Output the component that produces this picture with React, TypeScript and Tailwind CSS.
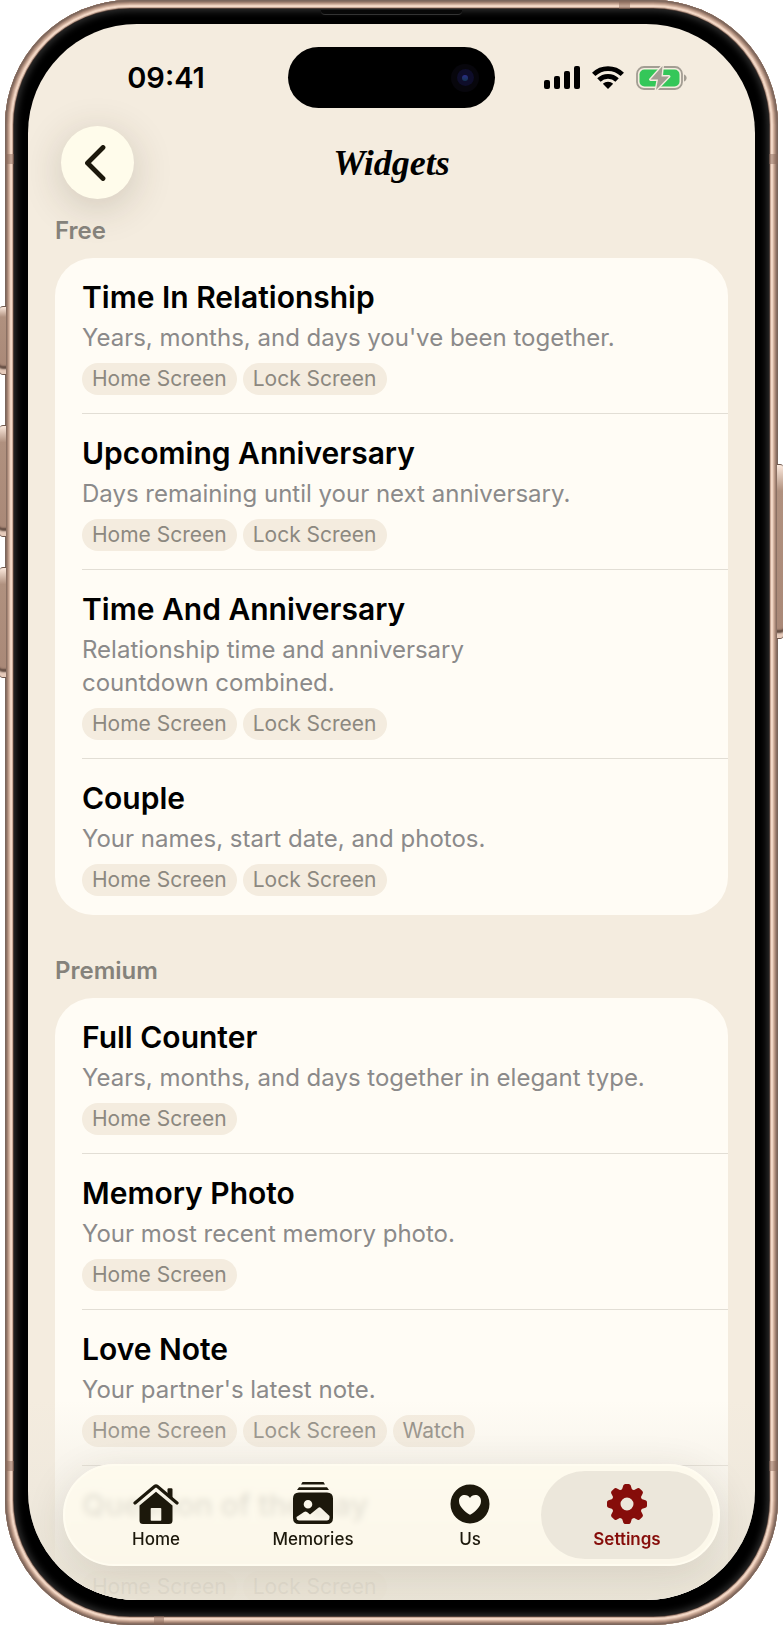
import type { ReactNode } from "react";

type Widget = {
  name: string;
  description?: string;
  narrow?: boolean;
  places: string[];
};

const freeWidgets: Widget[] = [
  {
    name: "Time In Relationship",
    description: "Years, months, and days you've been together.",
    places: ["Home Screen", "Lock Screen"],
  },
  {
    name: "Upcoming Anniversary",
    description: "Days remaining until your next anniversary.",
    places: ["Home Screen", "Lock Screen"],
  },
  {
    name: "Time And Anniversary",
    description: "Relationship time and anniversary countdown combined.",
    narrow: true,
    places: ["Home Screen", "Lock Screen"],
  },
  {
    name: "Couple",
    description: "Your names, start date, and photos.",
    places: ["Home Screen", "Lock Screen"],
  },
];

const premiumWidgets: Widget[] = [
  {
    name: "Full Counter",
    description: "Years, months, and days together in elegant type.",
    places: ["Home Screen"],
  },
  {
    name: "Memory Photo",
    description: "Your most recent memory photo.",
    places: ["Home Screen"],
  },
  {
    name: "Love Note",
    description: "Your partner's latest note.",
    places: ["Home Screen", "Lock Screen", "Watch"],
  },
  {
    name: "Question of the Day",
    places: ["Home Screen", "Lock Screen"],
  },
];

function WidgetRow({ widget }: { widget: Widget }) {
  return (
    <li className="group pl-[27px]">
      <div className="border-b border-[#e2ded5] pt-5 pb-[18px] pr-[27px] group-last:border-transparent">
        <h3 className="text-[30px] leading-[38px] font-semibold text-black">{widget.name}</h3>
        <p
          className={`mt-[5px] min-h-[33px] text-[24px] leading-[33px] text-[#8b8a8a] ${widget.narrow ? "max-w-[440px]" : ""}`}
        >
          {widget.description}
        </p>
        <ul className="mt-[9px] flex gap-1.5">
          {widget.places.map((place) => (
            <li key={place} className="rounded-full bg-[#f4ecdf] px-[10px] text-[21px] leading-8 text-[#8c8880]">
              {place}
            </li>
          ))}
        </ul>
      </div>
    </li>
  );
}

function WidgetSection({ title, widgets }: { title: string; widgets: Widget[] }) {
  return (
    <section aria-label={title}>
      <h2 className="text-[24px] leading-[33px] font-semibold text-[#85827b]">{title}</h2>
      <ul className="mt-[11px] rounded-[38px] bg-[#fffcf5]">
        {widgets.map((widget) => (
          <WidgetRow key={widget.name} widget={widget} />
        ))}
      </ul>
    </section>
  );
}

function StatusBar() {
  return (
    <div className="grid grid-cols-[1fr_207px_1fr] items-center pt-[23px]">
      <time className="pl-4 text-center text-[29px] leading-9 font-semibold text-black">09:41</time>
      <div className="flex h-[61px] items-center justify-end rounded-full bg-black pr-4">
        <span className="flex size-7 items-center justify-center rounded-full bg-[#07060c]">
          <span className="flex size-[17px] items-center justify-center rounded-full bg-[#0e0d2a]">
            <span className="size-1.5 rounded-full bg-linear-to-b from-[#2b2a86] to-[#12344f]" />
          </span>
        </span>
      </div>
      <div className="flex items-center justify-center gap-3 pr-[19px]">
        <svg width="36" height="23" viewBox="0 0 36 23" aria-label="Signal">
          <rect x="0" y="14" width="6" height="9" rx="2" />
          <rect x="10" y="10" width="6" height="13" rx="2" />
          <rect x="20" y="5" width="6" height="18" rx="2" />
          <rect x="30" y="0" width="6" height="23" rx="2" />
        </svg>
        <svg width="32" height="23" viewBox="0 0 32 23" aria-label="Wi-Fi">
          <g fill="none" stroke="#000" strokeWidth="4.8">
            <path d="M1.700 8.400A20.500 20.500 0 0 1 30.300 8.400" />
            <path d="M6.900 14A13 13 0 0 1 25.100 14" />
          </g>
          <path d="M16 23l-5.200-5.200a7.500 7.500 0 0 1 10.400 0z" />
        </svg>
        <svg width="51" height="24" viewBox="0 0 51 24" aria-label="Battery charging">
          <rect x="1" y="1" width="45" height="22" rx="7" fill="none" stroke="#a39d93" strokeWidth="1.800" />
          <rect x="3.500" y="3.500" width="40" height="17" rx="5" fill="#34c759" />
          <path d="M48 8.500c3.500 1.200 3.500 5.800 0 7z" fill="#a39d93" />
          <path
            d="M26.500 0L14.500 13.500h7.500L20 24 33 10.500h-7.500z"
            fill="#a39d93"
            stroke="#f4ecdf"
            strokeWidth="2.800"
            paintOrder="stroke"
            strokeLinejoin="round"
          />
        </svg>
      </div>
    </div>
  );
}

function HomeIcon() {
  return (
    <svg width="46" height="40" viewBox="0 0 46 40" fill="currentColor" aria-hidden>
      <path d="M34.500 5.500q0-1.200 1.200-1.200h2.600q1.200 0 1.200 1.200V16l-5-4.500z" />
      <path
        d="M2 19L21.500 2.600q1.500-1.200 3 0L44 19"
        fill="none"
        stroke="currentColor"
        strokeWidth="3.200"
        strokeLinecap="round"
      />
      <path
        fillRule="evenodd"
        d="M6.500 21.500L23 7.800l16.500 13.700V36.500q0 3.500-3.500 3.500H10q-3.500 0-3.500-3.500zM18.500 24q-.8 0-.8.800V36q0 .8.800.800h9q.8 0 .8-.8V24.800q0-.8-.8-.8z"
      />
    </svg>
  );
}

function MemoriesIcon() {
  return (
    <svg width="40" height="42" viewBox="0 0 40 42" fill="currentColor" aria-hidden>
      <path d="M9.500 0h21l1.500 2.400H8zM6 5.200h28l2 2.800H4z" />
      <path
        fillRule="evenodd"
        d="M6 10.500h28q6 0 6 6V36q0 6-6 6H6q-6 0-6-6V16.500q0-6 6-6zM15 18a4.300 4.300 0 1 0 0 8.600A4.300 4.300 0 0 0 15 18zM3.500 35V36q0 2.400 2.400 2.400h28.200q2.400 0 2.400-2.400v-2l-8.500-8q-1.500-1.300-3 0L17 32.500l-3-2.500q-1.500-1.200-3 0z"
      />
    </svg>
  );
}

function UsIcon() {
  return (
    <svg width="40" height="40" viewBox="0 0 40 40" fill="currentColor" aria-hidden>
      <path
        fillRule="evenodd"
        d="M20 .5a19.500 19.500 0 1 0 0 39a19.500 19.500 0 0 0 0-39zM20 14c2-4.500 11-4.500 11 3 0 6-6 10.500-10 13.300q-1 .7-2 0C15 27.500 9 23 9 17c0-7.500 9-7.500 11-3z"
      />
    </svg>
  );
}

function SettingsIcon() {
  return (
    <svg width="40" height="40" viewBox="0 0 40 40" fill="none" aria-hidden>
      <circle cx="20" cy="20" r="11" stroke="currentColor" strokeWidth="9" />
      <g fill="currentColor">
        {[0, 45, 90, 135, 180, 225, 270, 315].map((angle) => (
          <path
            key={angle}
            transform={`rotate(${angle} 20 20)`}
            d="M14.500 7L16.300 1.500Q16.800 0 18.300 0h3.400q1.500 0 2 1.500L25.500 7z"
          />
        ))}
      </g>
    </svg>
  );
}

function Tab({ label, icon, active }: { label: string; icon: ReactNode; active?: boolean }) {
  return (
    <button
      type="button"
      aria-current={active ? "page" : undefined}
      className={`flex h-[88px] flex-1 flex-col items-center rounded-full ${
        active ? "bg-[#ece7db] font-semibold text-[#860d0a]" : "font-medium text-[#1c180b]"
      }`}
    >
      <span className="flex h-[53px] items-end">{icon}</span>
      <span className="mt-1 text-[17px] leading-[22px]">{label}</span>
    </button>
  );
}

function TabBar() {
  return (
    <nav
      aria-label="Main"
      className="absolute inset-x-[35px] bottom-[34px] flex -space-x-[15px] rounded-full border-2 border-[#fffcf0] bg-[#fffbee]/80 p-[5px] shadow-[0_8px_40px_rgba(60,50,30,0.12)] backdrop-blur-[3px]"
    >
      <Tab label="Home" icon={<HomeIcon />} />
      <Tab label="Memories" icon={<MemoriesIcon />} />
      <Tab label="Us" icon={<UsIcon />} />
      <Tab label="Settings" icon={<SettingsIcon />} active />
    </nav>
  );
}

// Buttons and antenna bands sit on top of the metal rim.
function FrameDetails() {
  const button =
    "absolute w-[6px] border-y border-[#6e574c] bg-linear-to-b from-[#fbe9dd] via-[#b0917f] via-15% to-[#a98877] shadow-[inset_0_-8px_2px_-3px_#e6cbbb,inset_0_-10px_2px_-2px_#5d473d]";
  const band = "absolute bg-[#8a6a5c]/50";
  return (
    <div aria-hidden>
      <span className={`${button} left-0 top-[306px] h-[69px] rounded-l-[3px]`} />
      <span className={`${button} left-0 top-[425px] h-[112px] rounded-l-[3px]`} />
      <span className={`${button} left-0 top-[567px] h-[111px] rounded-l-[3px]`} />
      <span className={`${button} right-0 top-[464px] h-[175px] rounded-r-[3px]`} />
      <span className={`${band} left-[5px] top-[154px] h-[10px] w-[9px]`} />
      <span className={`${band} right-[5px] top-[154px] h-[10px] w-[9px]`} />
      <span className={`${band} left-[5px] bottom-[154px] h-[10px] w-[9px]`} />
      <span className={`${band} right-[5px] bottom-[154px] h-[10px] w-[9px]`} />
      <span className={`${band} right-[153px] top-0 h-[9px] w-[11px]`} />
      <span className={`${band} bottom-0 left-[154px] h-[9px] w-[10px]`} />
      <span className="absolute inset-x-[321px] top-[10px] h-[5px] rounded-b-[4px] border-b border-[#333] bg-[#080808]" />
    </div>
  );
}

export default function App() {
  return (
    <main className="relative bg-white px-[5px] font-['Inter','Liberation_Sans',sans-serif]">
      <div className="aspect-[773/1625] rounded-[125px] bg-[#4a3b35] p-[9px] shadow-[inset_0_0_0_1px_#7b665c,inset_0_0_0_2px_#8a7063,inset_0_0_0_3px_#a38373,inset_0_0_0_4px_#bd9c8a,inset_0_0_0_5px_#d6b6a3,inset_0_0_0_6px_#efd3c1,inset_0_0_0_7px_#f3d9c8,inset_0_0_0_8px_#c9a997]">
        <div className="h-full rounded-[116px] bg-black px-[14px] pt-[15px] pb-4 shadow-[inset_0_0_7px_2px_#303030]">
          <div className="relative flex h-full flex-col overflow-hidden rounded-[109px] bg-[#f4ecdf]">
            <StatusBar />
            <header className="mt-[18px] grid grid-cols-[73px_1fr_73px] items-center px-[33px]">
              <button
                type="button"
                aria-label="Back"
                className="flex size-[73px] items-center justify-center rounded-full bg-[#fffceb] pr-1 shadow-[0_8px_40px_rgba(60,50,30,0.2)]"
              >
                <svg width="22" height="36" viewBox="0 0 22 36" fill="none" aria-hidden>
                  <path
                    d="M18 2.500L2.500 18 18 33.500"
                    stroke="#1c180b"
                    strokeWidth="4.800"
                    strokeLinecap="round"
                    strokeLinejoin="round"
                  />
                </svg>
              </button>
              <h1 className="text-center font-['Liberation_Serif',serif] text-[36px] leading-10 font-bold text-black italic">
                Widgets
              </h1>
            </header>
            <div className="mt-[15px] flex min-h-0 flex-1 flex-col gap-[39px] px-[27px]">
              <WidgetSection title="Free" widgets={freeWidgets} />
              <WidgetSection title="Premium" widgets={premiumWidgets} />
            </div>
            <div
              aria-hidden
              className="absolute inset-x-0 bottom-0 h-[200px] bg-linear-to-b from-[#e9e3d6]/0 via-[#eae5da]/50 via-50% to-[#e9e3d5]/90 to-85%"
            />
            <TabBar />
          </div>
        </div>
      </div>
      <FrameDetails />
    </main>
  );
}
